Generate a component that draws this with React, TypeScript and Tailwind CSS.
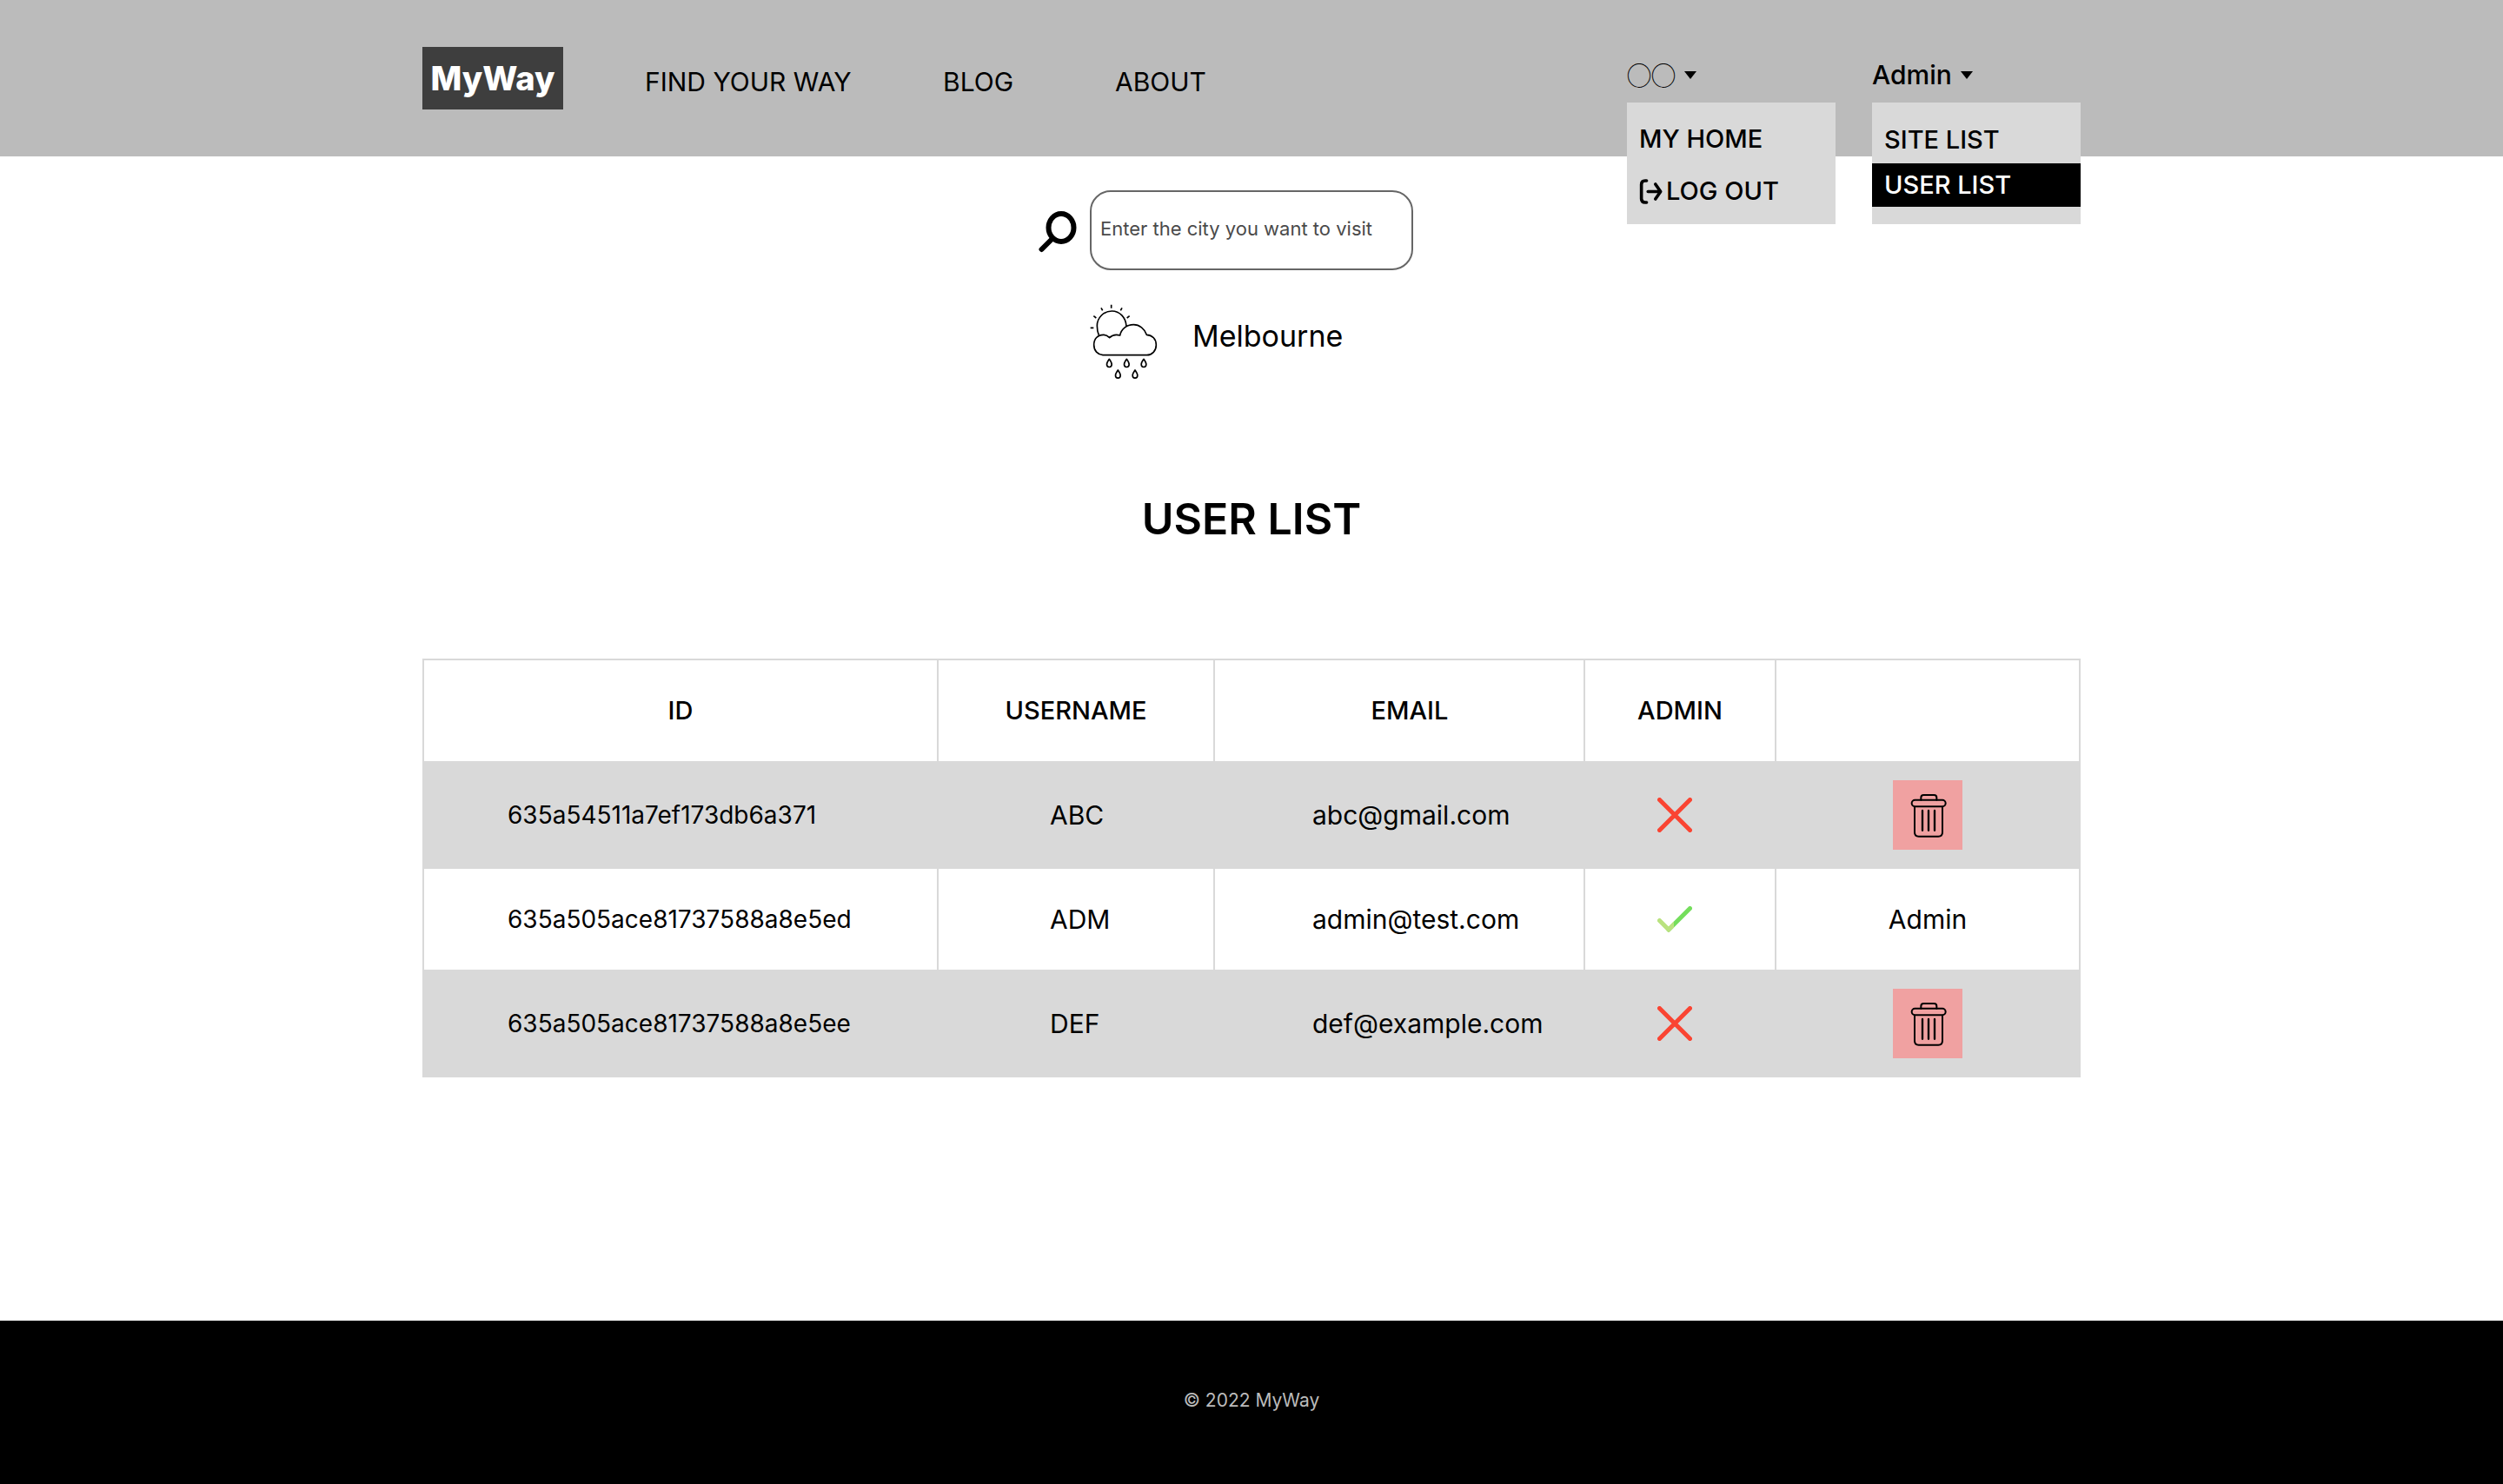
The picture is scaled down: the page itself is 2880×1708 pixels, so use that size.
import type { ReactNode } from "react";

type User = { id: string; name: string; email: string; admin: boolean };

const users: User[] = [
  { id: "635a54511a7ef173db6a371", name: "ABC", email: "abc@gmail.com", admin: false },
  { id: "635a505ace81737588a8e5ed", name: "ADM", email: "admin@test.com", admin: true },
  { id: "635a505ace81737588a8e5ee", name: "DEF", email: "def@example.com", admin: false },
];

function Caret() {
  return (
    <svg viewBox="0 0 14 9" className="h-[9px] w-[14px] shrink-0" aria-hidden="true">
      <path d="M0 0H14L7 9Z" />
    </svg>
  );
}

function LogOutIcon() {
  return (
    <svg viewBox="60 430 82 94" className="h-[31px] w-[27px] shrink-0" fill="none" stroke="#000" strokeLinecap="round" strokeLinejoin="round" strokeWidth="11" aria-hidden="true">
      <path d="M86 439H81Q68 439 68 452V502Q68 515 81 515H86" />
      <path d="M91 477H133M117 451L135 477L117 503" />
    </svg>
  );
}

function SearchIcon() {
  return (
    <svg viewBox="0 0 48 52" className="h-[52px] w-12" fill="none" stroke="#000" strokeWidth="6" strokeLinecap="round" aria-hidden="true">
      <ellipse cx="27" cy="23" rx="14.500" ry="16" />
      <path d="M16.500 36L4.500 48" />
    </svg>
  );
}

const drops = [
  [106, 235],
  [166, 235],
  [225, 235],
  [136, 273],
  [195, 273],
];

function WeatherIcon() {
  return (
    <svg viewBox="39 30 234 258" className="h-[86px] w-[78px]" fill="none" stroke="#000" strokeWidth="5" role="img" aria-label="Sun and rain">
      <path d="M70 137C66 128 64 117 64 105C64 77 87 54 115 54C142 54 163 76 165 106" />
      <path d="M84 206C66 204 53 191 53 171C53 150 66 136 86 136C94 136 101 140 107 146C116 137 129 134 143 138C147 116 166 101 190 101C210 101 228 115 235 136C255 137 268 151 268 171C268 191 254 206 236 206Z" strokeLinejoin="round" />
      <path d="M113 32V44M78 43L83 52M150 43L145 52M52 71L61 78M176 71L167 78M41 112H52" />
      {drops.map(([x, y]) => (
        <path key={`${x}-${y}`} transform={`translate(${x} ${y})`} d="M0 -15C-5 -8 -8.500 -3 -8.500 3A8.500 9.500 0 0 0 8.500 3C8.500 -3 5 -8 0 -15Z" strokeLinejoin="round" />
      ))}
    </svg>
  );
}

function TrashIcon() {
  return (
    <svg viewBox="54 54 240 240" className="size-20" fill="none" stroke="#000" strokeWidth="6" strokeLinecap="round" aria-hidden="true">
      <rect x="119" y="122.500" width="117" height="22" rx="11" />
      <path d="M151 122V114Q151 105 160 105H196Q205 105 205 114V122" />
      <path d="M129 146V234Q129 248 143 248H211Q225 248 225 234V146" />
      <path d="M156 159V227M177 159V227M198 159V227" strokeWidth="7" />
    </svg>
  );
}

function CrossIcon() {
  return (
    <svg viewBox="0 0 40 40" className="size-10" stroke="#fa4432" strokeWidth="5" strokeLinecap="round" role="img" aria-label="No">
      <path d="M2.500 2.500L37.500 37.500M37.500 2.500L2.500 37.500" />
    </svg>
  );
}

function CheckIcon() {
  return (
    <svg viewBox="0 0 40 30" className="h-[30px] w-10" fill="none" strokeWidth="5" strokeLinecap="round" role="img" aria-label="Yes">
      <clipPath id="check-left">
        <rect x="0" y="0" width="19" height="30" />
      </clipPath>
      <path d="M13 27L37.500 2.500" stroke="#74de5c" />
      <path clipPath="url(#check-left)" d="M2.500 16.500L13 27L20 20" stroke="#b9e27f" />
    </svg>
  );
}

function Menu({ label, children }: { label: ReactNode; children: ReactNode }) {
  return (
    <div className="relative mt-[70px] w-60">
      <button type="button" className="flex h-8 items-center gap-2.5 whitespace-nowrap text-[30px] font-medium">
        {label}
        <Caret />
      </button>
      <ul className="absolute left-0 top-full z-10 mt-4 w-full bg-[#d9d9d9] text-[29px] font-medium">{children}</ul>
    </div>
  );
}

export default function App() {
  return (
    <div className="flex min-h-screen flex-col bg-white font-['Inter',sans-serif] text-black">
      <header className="bg-[#bbbbbb]">
        <div className="mx-auto flex h-[180px] max-w-[1908px] items-start">
          <a href="#" className="mt-[54px] flex h-[72px] w-[162px] items-center justify-center bg-[#3e3e3e] text-[38px] font-extrabold text-white">
            MyWay
          </a>
          <nav className="ml-[94px] mt-[70px] grid h-12 grid-cols-[343px_198px_auto] items-center text-[30px]">
            <a href="#">FIND YOUR WAY</a>
            <a href="#">BLOG</a>
            <a href="#">ABOUT</a>
          </nav>
          <div className="ml-auto flex gap-[42px]">
            <Menu label={<span className="font-['Noto_Sans_CJK_KR',sans-serif] text-[28px] font-medium">◯◯</span>}>
              <li className="pt-3">
                <a href="#" className="flex h-[60px] items-center px-3.5">MY HOME</a>
              </li>
              <li className="pb-2">
                <a href="#" className="flex h-[60px] items-center gap-1 px-3.5">
                  <LogOutIcon />
                  LOG OUT
                </a>
              </li>
            </Menu>
            <Menu label="Admin">
              <li className="pt-4">
                <a href="#" className="flex h-[54px] items-center px-3.5">SITE LIST</a>
              </li>
              <li className="pb-5">
                <a href="#" className="flex h-[50px] items-center bg-black px-3.5 text-white">USER LIST</a>
              </li>
            </Menu>
          </div>
        </div>
      </header>

      <main className="flex-1">
        <form className="mt-[39px] grid grid-cols-[1fr_372px_1fr] items-center gap-x-3">
          <label htmlFor="city" className="justify-self-end" aria-label="Search for a city">
            <SearchIcon />
          </label>
          <input
            id="city"
            type="text"
            placeholder="Enter the city you want to visit"
            className="h-[92px] w-full rounded-3xl border-2 border-[#666666] bg-white px-2.5 pb-1 text-[22px] placeholder:text-[#4a4a4a]"
          />
        </form>

        <section className="mx-auto mt-[39px] flex w-[372px] gap-10">
          <WeatherIcon />
          <p className="text-[34px] leading-[74px]">Melbourne</p>
        </section>

        <h1 className="mt-[133px] text-center text-[50px] font-semibold leading-[56px]">USER LIST</h1>

        <table className="mx-auto mt-[133px] w-full max-w-[1908px] table-fixed border-collapse border-2 border-[#d9d9d9] text-[30px]">
          <colgroup>
            <col className="w-[592px]" />
            <col className="w-[318px]" />
            <col className="w-[426px]" />
            <col className="w-[220px]" />
            <col />
          </colgroup>
          <thead className="text-[29px]">
            <tr className="h-[118px]">
              <th className="border-2 border-[#d9d9d9] font-medium">ID</th>
              <th className="border-2 border-[#d9d9d9] font-medium">USERNAME</th>
              <th className="border-2 border-[#d9d9d9] pl-6 font-medium">EMAIL</th>
              <th className="border-2 border-[#d9d9d9] font-medium">ADMIN</th>
              <th className="border-2 border-[#d9d9d9]" aria-label="Actions" />
            </tr>
          </thead>
          <tbody>
            {users.map((user) => (
              <tr key={user.id} className="h-[118px] odd:h-[122px] odd:bg-[#d9d9d9] last:h-[120px]">
                <td className="border-2 border-[#d9d9d9] pl-24 text-[28px]">{user.id}</td>
                <td className="border-2 border-[#d9d9d9] pl-32">{user.name}</td>
                <td className="border-2 border-[#d9d9d9] pl-28">{user.email}</td>
                <td className="border-2 border-[#d9d9d9] pr-3">
                  <div className="flex justify-center">{user.admin ? <CheckIcon /> : <CrossIcon />}</div>
                </td>
                <td className="border-2 border-[#d9d9d9]">
                  <div className="flex justify-center">
                    {user.admin ? (
                      "Admin"
                    ) : (
                      <button type="button" aria-label={`Delete ${user.name}`} className="bg-[#f0a1a1]">
                        <TrashIcon />
                      </button>
                    )}
                  </div>
                </td>
              </tr>
            ))}
          </tbody>
        </table>
      </main>

      <footer className="flex h-[188px] items-center justify-center bg-black pb-1 text-[21px] text-[#bbbbbb]">© 2022 MyWay</footer>
    </div>
  );
}
